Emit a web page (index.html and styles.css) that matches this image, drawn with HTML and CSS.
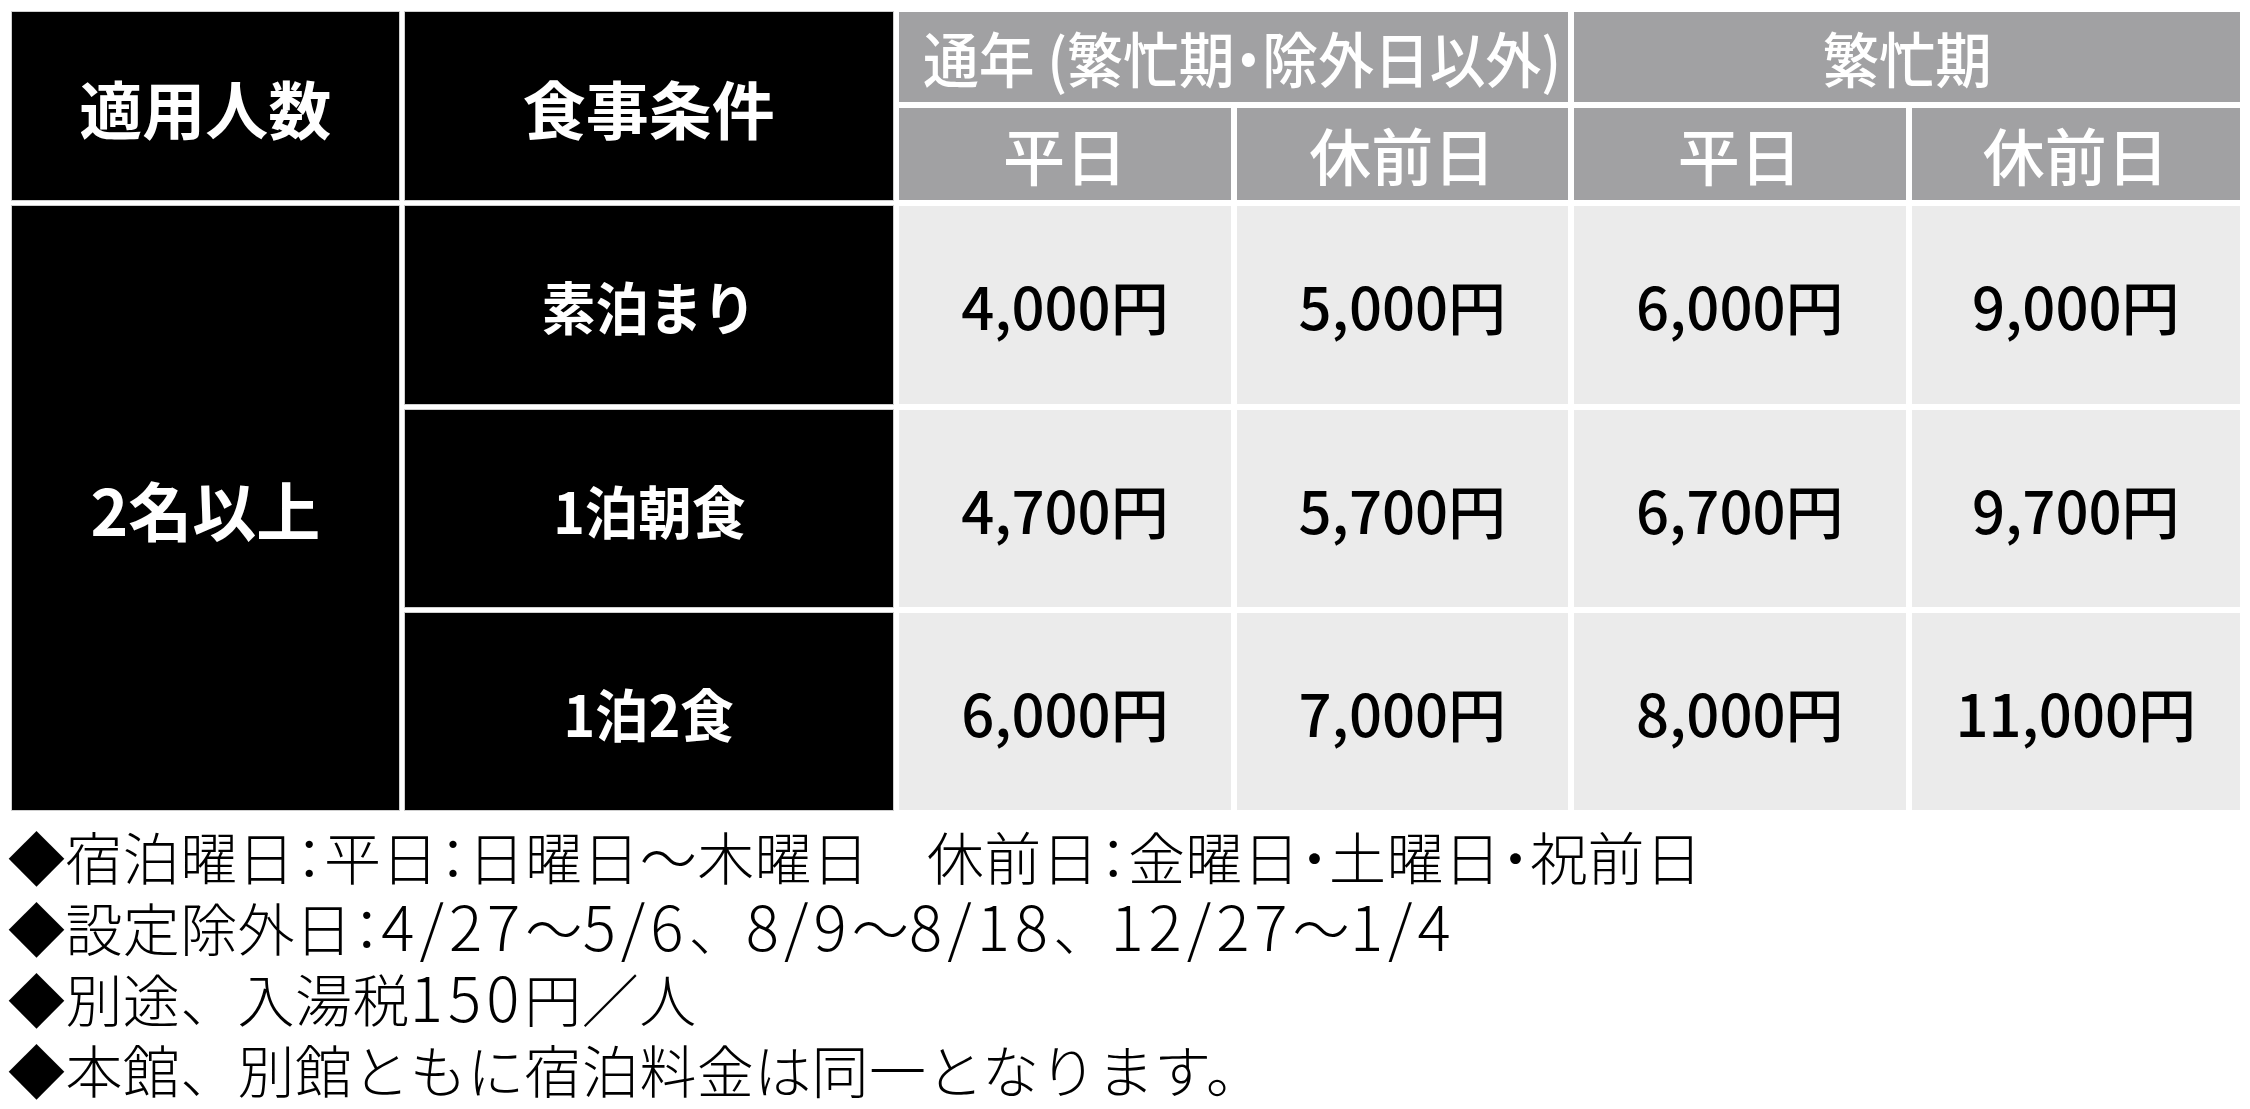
FILE: index.html
```html
<!DOCTYPE html>
<html lang="ja">
<head>
<meta charset="utf-8">
<title>宿泊料金</title>
<link rel="stylesheet" href="styles.css">
</head>
<body>
<table class="rates">
  <colgroup>
    <col class="c-people">
    <col class="c-meal">
    <col class="c-price">
    <col class="c-price">
    <col class="c-price">
    <col class="c-price-last">
  </colgroup>
  <thead>
    <tr class="h1">
      <th rowspan="2" class="dark head-big"><span class="t">適用人数</span></th>
      <th rowspan="2" class="dark head-big"><span class="t">食事条件</span></th>
      <th colspan="2" class="grey head-period offset"><span class="t narrow">通年 (繁忙期・除外日以外)</span></th>
      <th colspan="2" class="grey head-period"><span class="t mid">繁忙期</span></th>
    </tr>
    <tr class="h2">
      <th class="grey head-day"><span class="t">平日</span></th>
      <th class="grey head-day"><span class="t">休前日</span></th>
      <th class="grey head-day"><span class="t">平日</span></th>
      <th class="grey head-day"><span class="t">休前日</span></th>
    </tr>
  </thead>
  <tbody>
    <tr class="r1">
      <th rowspan="3" class="dark people"><span class="t">2名以上</span></th>
      <th class="dark meal"><span class="t mid">素泊まり</span></th>
      <td class="price">4,000円</td>
      <td class="price">5,000円</td>
      <td class="price">6,000円</td>
      <td class="price">9,000円</td>
    </tr>
    <tr class="r2">
      <th class="dark meal"><span class="t mid">1泊朝食</span></th>
      <td class="price">4,700円</td>
      <td class="price">5,700円</td>
      <td class="price">6,700円</td>
      <td class="price">9,700円</td>
    </tr>
    <tr class="r3">
      <th class="dark meal"><span class="t mid">1泊2食</span></th>
      <td class="price">6,000円</td>
      <td class="price">7,000円</td>
      <td class="price">8,000円</td>
      <td class="price">11,000円</td>
    </tr>
  </tbody>
</table>
<ul class="notes">
  <li>◆宿泊曜日<span class="p">：</span>平日<span class="p">：</span>日曜日～木曜日　休前日<span class="p">：</span>金曜日<span class="p">・</span>土曜日<span class="p">・</span>祝前日</li>
  <li>◆設定除外日<span class="p">：</span><span class="num">4/27</span>～<span class="num">5/6</span>、<span class="num">8/9</span>～<span class="num">8/18</span>、<span class="num">12/27</span>～<span class="num">1/4</span></li>
  <li>◆別途、入湯税<span class="num">150</span>円／人</li>
  <li>◆本館、別館ともに宿泊料金は同一となります。</li>
</ul>
</body>
</html>
```
FILE: styles.css
```css
html, body {
  margin: 0;
  padding: 0;
  background: #ffffff;
}
body {
  font-family: "Noto Sans CJK JP", "Noto Sans", sans-serif;
  color: #000;
}
.rates {
  border-collapse: separate;
  border-spacing: 6px;
  table-layout: fixed;
  width: 2240px;
  margin: 6px 0 0 6px;
}
.c-people { width: 386px; }
.c-meal { width: 488px; }
.c-price { width: 331px; }
.c-price-last { width: 328px; }

.rates th, .rates td {
  padding: 0;
  text-align: center;
  vertical-align: middle;
  font-feature-settings: "palt";
  white-space: nowrap;
  overflow: hidden;
}
.h1 { height: 90px; }
.h2 { height: 92px; }
.r1 { height: 198px; }
.r2 { height: 197px; }
.r3 { height: 197px; }

.dark {
  background: #000;
  color: #fff;
  box-shadow: 0 0 0 1px #cfcfcf;
}
.grey {
  background: #a1a1a3;
  color: #fff;
}
.t { display: inline-block; }
.narrow { transform: scaleX(0.93); }
.mid { transform: scaleX(0.94); }

.head-big {
  font-size: 63px;
  font-weight: 700;
  padding-bottom: 4px;
}
.head-period {
  font-size: 60px;
  font-weight: 500;
  line-height: 1;
}
.rates .offset { padding-right: 24px; }
.head-day {
  font-size: 62px;
  font-weight: 500;
  line-height: 1;
}
.people {
  font-size: 64px;
  font-weight: 700;
}
.rates .meal {
  font-size: 57px;
  font-weight: 700;
  font-feature-settings: normal;
}
.price {
  background: #ebebeb;
  font-size: 58px;
  font-weight: 500;
}

.notes {
  list-style: none;
  margin: 4px 0 0 0;
  padding: 0 0 0 8px;
  font-size: 57px;
  line-height: 71px;
  font-weight: 300;
  letter-spacing: 0.4px;
  white-space: nowrap;
}
.notes li { margin: 0; }
.notes .p { font-feature-settings: "palt"; }
.notes .num {
  font-size: 62px;
  line-height: 1;
  letter-spacing: 5px;
}
```
